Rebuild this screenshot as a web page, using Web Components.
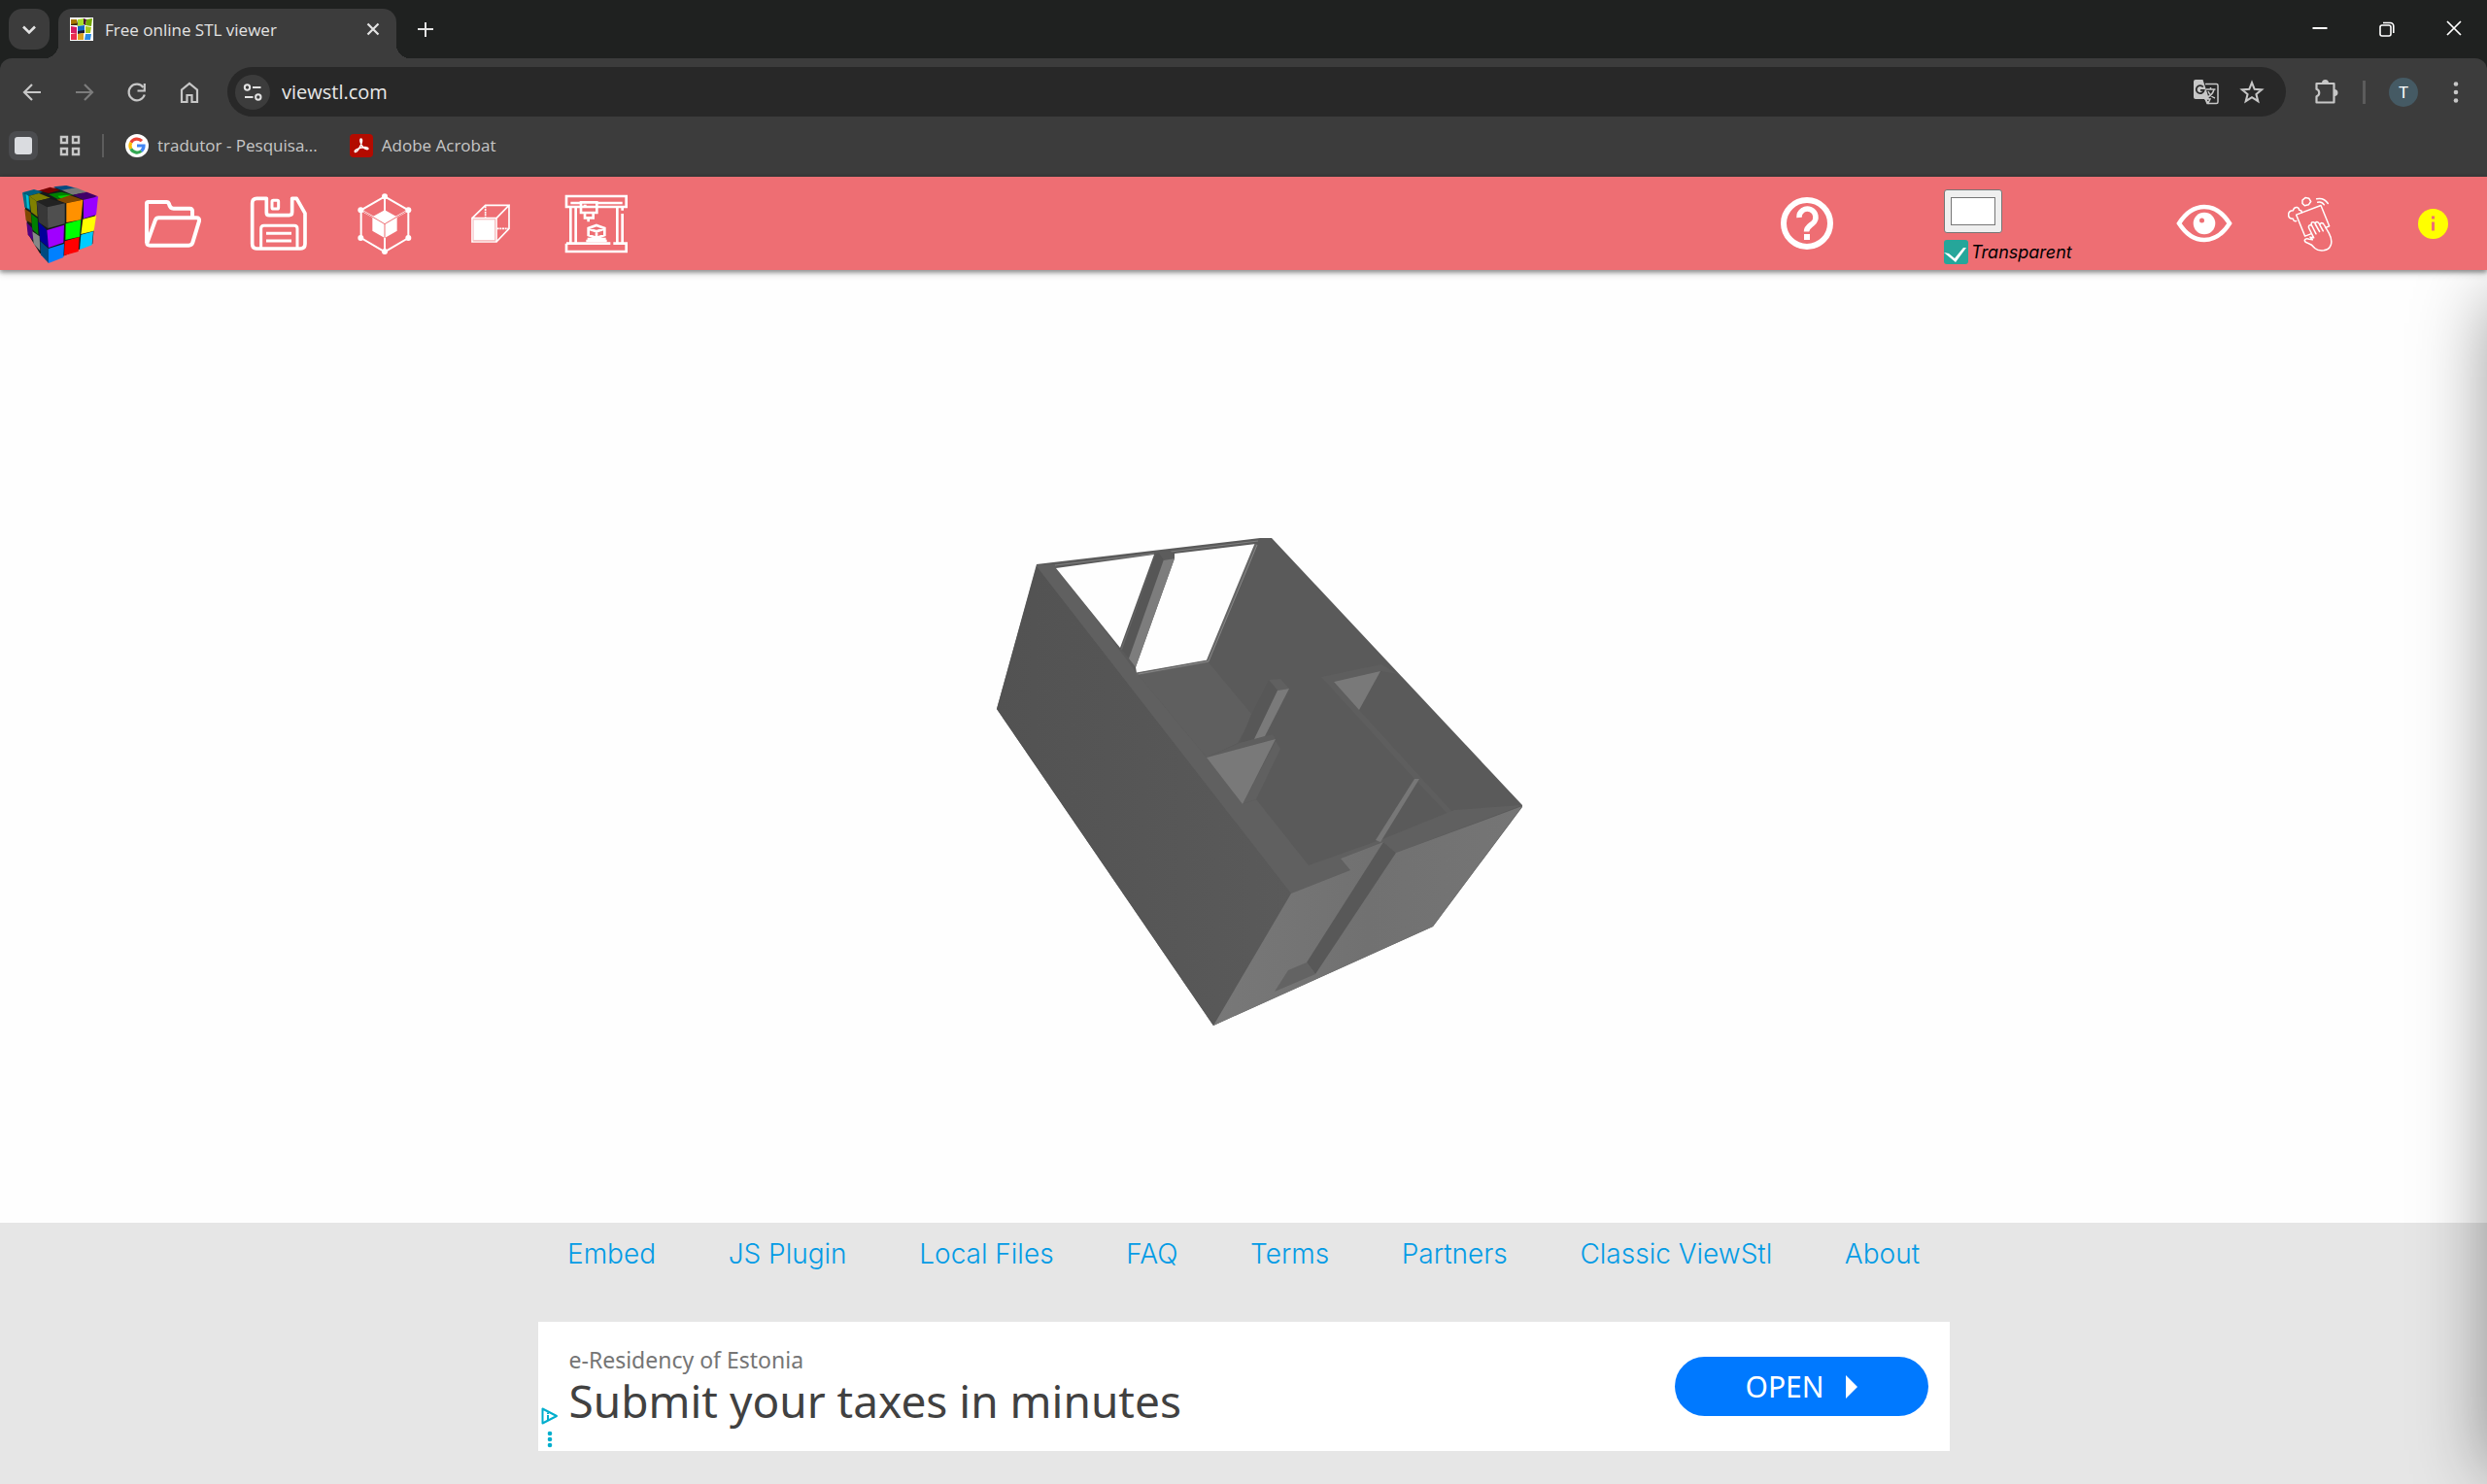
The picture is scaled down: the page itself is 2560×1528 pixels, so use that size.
<!DOCTYPE html>
<html lang="en">
<head>
<meta charset="utf-8">
<title>Free online STL viewer</title>
<style>
	body {
		margin: 0;
		background: #fff;
	}
</style>
</head>
<body>
<stl-window></stl-window>
<script>
(function () {
	const UI_FONT = '"Open Sans", "Noto Sans", sans-serif';
	const SITE_FONT = 'Inter, "Open Sans", sans-serif';

	// name: [viewBox, width, height, markup]
	const ICONS = {
		chevron: ['0 0 24 24', 24, 24, '<path d="M6 9.500l6 6 6-6" fill="none" stroke="currentColor" stroke-width="2.600"/>'],
		close: ['0 0 24 24', 24, 24, '<path d="M6.500 6.500l11 11M17.500 6.500l-11 11" stroke="currentColor" stroke-width="2.200"/>'],
		plus: ['0 0 24 24', 24, 24, '<path d="M12 5v15M4 12h16" stroke="currentColor" stroke-width="2"/>'],
		minimize: ['0 0 24 24', 24, 24, '<path d="M4.500 11h15" stroke="currentColor" stroke-width="2"/>'],
		restore: ['0 0 24 24', 24, 24, '<g fill="none" stroke="currentColor" stroke-width="1.600"><rect x="5" y="8" width="11" height="11" rx="2"/><path d="M8 5.500h7.500a3.300 3.300 0 0 1 3.300 3.300V16"/></g>'],
		exit: ['0 0 24 24', 24, 24, '<path d="M5 4l14 14M19 4L5 18" stroke="currentColor" stroke-width="1.700"/>'],
		back: ['0 0 24 24', 24, 24, '<path d="M21 12H4.500M12 4l-8 8 8 8" fill="none" stroke="currentColor" stroke-width="2.200"/>'],
		forward: ['0 0 24 24', 24, 24, '<path d="M3 12h16.500M12 4l8 8-8 8" fill="none" stroke="currentColor" stroke-width="2.200"/>'],
		reload: ['0 0 24 24', 24, 24, '<path d="M19.800 14.500A8.300 8.300 0 1 1 18.500 7" fill="none" stroke="currentColor" stroke-width="2.200"/><path d="M19.800 3v7.500h-7.300" fill="none" stroke="currentColor" stroke-width="2.200"/>'],
		home: ['0 0 24 24', 24, 24, '<path d="M4 22V9.500L12 3l8 6.500V22h-5.500v-7h-5v7z" fill="none" stroke="currentColor" stroke-width="2.200"/>'],
		tune: ['0 0 24 24', 24, 24, '<g fill="none" stroke="currentColor" stroke-width="2"><circle cx="6.500" cy="7" r="2.700"/><path d="M12 7h8.500M4 17h8.500"/><circle cx="17.800" cy="17" r="2.700"/></g>'],
		translate: ['0 0 27 27', 27, 27, '<path d="M13 5.500h11.500a1.500 1.500 0 0 1 1.500 1.500v17a1.500 1.500 0 0 1-1.500 1.500h-9.500l-2-5" fill="none" stroke="currentColor" stroke-width="1.500"/><path d="M3 1h7.500l6.500 20H3a2 2 0 0 1-2-2V3a2 2 0 0 1 2-2z" fill="currentColor"/><path d="M10.800 8.500a4 4 0 1 0 .9 3.400H8" fill="none" stroke="#282828" stroke-width="1.800"/><path d="M14 11h9.500M18.500 9v2M22 11c-.8 3.500-3.500 6.500-6.500 8M16 13c1.500 3.500 4 6 7 7M13 21l3 4 2-4z" fill="none" stroke="currentColor" stroke-width="1.500"/>'],
		star: ['0 0 24 24', 26, 26, '<path d="M12 2.800l2.500 6.300 6.800.5-5.200 4.300 1.700 6.600-5.800-3.700-5.800 3.700 1.700-6.600-5.200-4.300 6.800-.5z" fill="none" stroke="currentColor" stroke-width="1.900"/>'],
		puzzle: ['0 0 27 27', 27, 27, '<path d="M3.500 5h18v19.500h-18v-6.200a4 4 0 0 0 0-7.600z" fill="none" stroke="currentColor" stroke-width="2.200" stroke-linejoin="round"/><path d="M9 4.500a3.500 3.500 0 0 1 7 0zM22 11a3.300 3.300 0 0 1 0 7z" fill="currentColor"/>'],
		more: ['0 0 24 24', 24, 24, '<g fill="currentColor"><circle cx="12" cy="3.500" r="2.300"/><circle cx="12" cy="12" r="2.300"/><circle cx="12" cy="20.500" r="2.300"/></g>'],
		apps: ['0 0 22 22', 22, 22, '<g fill="none" stroke="currentColor" stroke-width="2.400"><path d="M2 2h6v6H2zM14 2h6v6h-6zM2 14h6v6H2zM14 14h6v6h-6z"/></g>'],
		panel: ['0 0 30 30', 30, 30, '<rect width="30" height="30" rx="8" fill="#4b4c4f"/><rect x="6" y="6" width="18" height="18" rx="3" fill="#dadce0"/>'],
		favicon: ['0 0 24 24', 24, 24, '<path d="M0 0h24v24H0z" fill="#fff"/><path d="M1 2h6v6H1z" fill="#a87800"/><path d="M1 7l6-1v2H1zM7 2l1 5-1 2z" fill="#3a2a08"/><path d="M8 2l6-1v7l-6 1z" fill="#a5e02c"/><path d="M14 1l3 1-1 6-2-1z" fill="#4d0a33"/><path d="M17 2l6-1-1 8-6-1z" fill="#72a800"/><path d="M1 9l6 1v6H1z" fill="#d41c62"/><path d="M8 9l7-1v7l-7 1z" fill="#1268c4"/><path d="M8 14l7-1v3l-7 1z" fill="#1a1a30"/><path d="M16 9l6 1-1 6h-5z" fill="#a6c81c"/><path d="M1 17l6-1v7H1z" fill="#ea2b4e"/><path d="M8 17l6-1v7H8z" fill="#dca322"/><path d="M16 17h6l-1 6h-6z" fill="#2a8ae4"/>'],
		google: ['0 0 24 24', 24, 24, '<circle cx="12" cy="12" r="12" fill="#fff"/><g fill="none" stroke-width="3.200"><path d="M17 7.200A7 7 0 0 0 5.800 8.700" stroke="#ea4335"/><path d="M5.800 8.700a7 7 0 0 0 0 6.600" stroke="#fbbc05"/><path d="M5.800 15.300A7 7 0 0 0 16.500 17.400" stroke="#34a853"/><path d="M16.500 17.400A7 7 0 0 0 19 12h-7" stroke="#4285f4"/></g>'],
		acrobat: ['0 0 24 24', 24, 24, '<rect width="24" height="24" rx="4" fill="#b30b00"/><path d="M11.500 5c1.500 0 1.300 3-.2 6.500C9.500 15.500 7 19 5.500 18.500 4 17.500 8 14.800 12 14c4-.8 7-.3 7 1s-3 .8-5.300-1.500C11.300 11.200 10 5 11.500 5z" fill="none" stroke="#fff" stroke-width="1.500"/>'],
		logo: ['69 45 234 243', 78, 81, `
			<path d="M72 72L200 50l98 36-12 142-134 56-30-28-34-56z" fill="#151a1a"/>
			<path d="M165 52l40-4 30 8-45 7z" fill="#004a80"/><path d="M120 64l35-11 30 9-35 10z" fill="#700"/>
			<path d="M69 70l36-10 27 8-42 12z" fill="#006080"/><path d="M190 62l45-7 33 13-43 9z" fill="#777"/>
			<path d="M150 75l40-7 35 9-47 13z" fill="#008000"/><path d="M178 80l38-3-2 4-26 8z" fill="#00d000"/><path d="M90 80l30-8 35 14-42 11z" fill="#808000"/>
			<path d="M225 77l43-9 35 14-45 10z" fill="#400068"/><path d="M175 92l40-14 41 14-53 11z" fill="#804800"/>
			<path d="M113 97l37-9 50 15-54 12z" fill="#222"/>
			<path d="M69 70l21 10 4 45-18-10z" fill="#007088"/><path d="M80 75l8 5 2 40-6-3z" fill="#00c0d8"/><path d="M76 120l19 12 3 33-18-10z" fill="#804800"/><path d="M82 162l18 18 3 38-17-18z" fill="#500080"/>
			<path d="M90 80l23 17 3 48-20-15z" fill="#808000"/><path d="M96 135l20 15 2 50-18-16z" fill="#008000"/><path d="M100 190l22 15 2 45-20-22z" fill="#888"/>
			<path d="M113 97l33 18 2 65-28-18z" fill="#383838"/><path d="M118 160l27 26 5 54-26-22z" fill="#00009a"/><path d="M124 220l26 23v45l-24-26z" fill="#004a80"/>
			<path d="M146 115l54-12v63l-52 14z" fill="#4f4f4f"/><path d="M205 103l51-11-6 62-45 8z" fill="#ff9100"/><path d="M258 92l45-10-6 56-39 12z" fill="#90f"/>
			<path d="M145 186l53-16-2 54-46 16z" fill="#a000ff"/><path d="M203 166l47-12-4 52-44 10z" fill="#0f0"/><path d="M256 152l41-10-7 46-40 10z" fill="#ff0"/>
			<path d="M150 243l48-15-2 42-46 18z" fill="#0080ff"/><path d="M200 220l45-13-3 45-44 12z" fill="red"/><path d="M250 200l38-10-4 42-38 14z" fill="#00ccff"/>`],
		folder: ['444 90 180 150', 60, 50, '<g fill="none" stroke="#fff" stroke-width="12" stroke-linejoin="round"><path d="M453 226V104q0-5 5-5h56q6 0 8 6 3 14 14 14h50q8 0 8 8v20"/><path d="M454 226l26-72q3-6 10-6h116q11 0 9 10l-20 66q-3 9-12 9H464q-10 0-10-7z"/></g>'],
		save: ['771 78 180 174', 60, 58, '<g fill="none" stroke="#fff" stroke-width="11" stroke-linejoin="round"><path d="M823 88h-30q-14 0-14 14v126q0 15 14 15h134q15 0 15-15v-94l-26-46h-14v42q0 10-9 10h-62q-8 0-8-8z"/><path d="M806 243v-62q0-9 9-9h94q9 0 9 9v62M822 196h78M822 219h78" stroke-width="9"/><rect x="840" y="94" width="20" height="26" rx="4" stroke-width="9"/></g>'],
		mesh: ['84 70 168 189', 56, 63, '<g fill="none" stroke="#fff" stroke-width="6"><path d="M168 80l73 42v86l-73 43-73-43v-86zM168 80v46M95 122l46 26M241 122l-46 26M168 165v86"/></g><path d="M168 122l38 21v43l-38 22-38-22v-43z" fill="#fff"/><path d="M95 122l73 43 73-43M168 165v43" fill="none" stroke="#ee6e73" stroke-width="3"/><g fill="#fff"><circle cx="168" cy="80" r="9"/><circle cx="94" cy="122" r="9"/><circle cx="241" cy="122" r="9"/><circle cx="94" cy="208" r="9"/><circle cx="241" cy="208" r="9"/><circle cx="168" cy="250" r="9"/></g>'],
		box: ['435 105 120 120', 40, 40, '<path d="M441 152h68v66h-68z" fill="#fff"/><g fill="none" stroke="#fff" stroke-width="5"><path d="M438 149h75v73h-75zM438 149l41-40h73l-39 40M552 109v72l-39 41"/></g><path d="M479 112v34M515 181h34" stroke="#fff" stroke-width="5" stroke-dasharray="6 2"/><path d="M442 153h67v65h-67z" fill="none" stroke="#f6b6b9" stroke-width="2"/>'],
		printer: ['723 73 198 183', 66, 61, '<g fill="none" stroke="#fff" stroke-width="8"><path d="M729 79h185v33H729zM729 225h136M874 225h40v25H729v-25M742 115v106M758 115v106M886 115v106M902 133v88M902 115v8"/><path d="M742 100h34M824 100h78M774 98h49v32h-49zM786 132v14h26v-14M797 146v12M790 217h64M794 211h57"/><path d="M822 169l25 9v21l-25 9-25-9v-21zM799 180l23 8 23-8M822 188v20"/></g><path d="M782 105h9v8h-9z" fill="#fff"/>'],
		help: ['0 0 54 54', 54, 54, '<circle cx="27" cy="27" r="24" fill="none" stroke="#fff" stroke-width="6"/><path d="M19 21a8.500 8.500 0 1 1 14 6c-3 2.600-6.500 4-6.500 8.500" fill="none" stroke="#fff" stroke-width="5.500"/><path d="M24 38h6v6h-6z" fill="#fff"/>'],
		eye: ['0 0 58 40', 58, 40, '<path d="M3 20C10 9 19 3 29 3s19 6 26 17C48 31 39 37 29 37S10 31 3 20z" fill="none" stroke="#fff" stroke-width="4.500"/><circle cx="29" cy="20" r="11.300" fill="#fff"/><circle cx="26.500" cy="17" r="2.500" fill="#ee6e73"/>'],
		touch: ['468 80 138 170', 46, 57, '<g fill="none" stroke="#fff" stroke-width="4.500" stroke-linejoin="round" stroke-linecap="round"><path d="M539 196l-18 7-27-66 76-29 26 64-12 5"/><path d="M494 156q-8 3-10-7-15 0-14-13 0-11 14-12 3-12 13-10 6 2 6 8 8 0 8 8"/><path d="M513 92l9-8 11 2 6 10-7 10-12 3-7-7zM557 88q22-5 35 14M560 98q13-3 20 8"/><path d="M548 208l-14-28q-4-8 1-11 5-2 9 5l11 22-14-28q-2-7 3-8 5-2 9 5l13 24-13-22q-1-7 4-8 5-1 8 6l12 22-10-18q0-6 5-7 5 0 8 6l15 26q12 22 5 38-4 12-21 15-18 2-28-7-9-12-20-15-12-3-11-10 3-6 14-3l10 2-7-8z"/></g>'],
		info: ['0 0 31 31', 31, 31, '<circle cx="15.500" cy="15.500" r="15.500" fill="#ff0"/><path d="M14 7.500h3v3h-3zM14 13.500h3v9h-3z" fill="#ee6e73"/>'],
		play: ['0 0 12 24', 12, 24, '<path d="M0 0l12 12L0 24z" fill="currentColor"/>'],
		adchoices: ['0 0 18 18', 18, 18, '<path d="M1.500 1.500v15L16 9z" fill="none" stroke="currentColor" stroke-width="2" stroke-linejoin="round"/><path d="M6 8h2v5H6zM6 5.500h2v1.600H6z" fill="currentColor"/>'],
		dots: ['0 0 6 18', 6, 18, '<g fill="currentColor"><circle cx="3" cy="3" r="2.300"/><circle cx="3" cy="9" r="2.300"/><circle cx="3" cy="15" r="2.300"/></g>'],
	};

	function define(name, render) {
		if (customElements.get(name)) return;
		customElements.define(
			name,
			class extends HTMLElement {
				connectedCallback() {
					if (this.shadowRoot) return;
					const template = document.createElement('template');
					template.innerHTML = render(this);
					this.attachShadow({ mode: 'open' }).appendChild(
						template.content.cloneNode(true)
					);
				}
			}
		);
	}

	const BUTTON_RESET = `
		button {
			display: flex;
			align-items: center;
			justify-content: center;
			flex: none;
			margin: 0;
			padding: 0;
			border: 0;
			background: none;
			color: inherit;
			font: inherit;
			cursor: pointer;
		}`;

	define('stl-icon', (el) => {
		const [viewBox, width, height, markup] = ICONS[el.getAttribute('name')];
		return `
		<style>
			:host { display: inline-flex; flex: none; }
			svg { display: block; }
		</style>
		<svg viewBox="${viewBox}" width="${width}" height="${height}" aria-hidden="true">${markup}</svg>`;
	});

	define('browser-tabs', () => `
		<style>
			:host {
				display: flex;
				align-items: flex-end;
				height: 60px;
				padding-left: 9px;
				background: #1f2120;
				color: #e3e3e3;
				font: 17px/26px ${UI_FONT};
			}
			${BUTTON_RESET}
			.search {
				width: 42px;
				height: 42px;
				margin: 0 9px 9px 0;
				border-radius: 14px;
				background: #3c3c3c;
			}
			.tab {
				position: relative;
				display: flex;
				align-items: center;
				box-sizing: border-box;
				width: 348px;
				height: 51px;
				padding: 0 12px 9px;
				border-radius: 14px 14px 0 0;
				background: #3c3c3c;
			}
			.tab::before,
			.tab::after {
				content: '';
				position: absolute;
				bottom: 0;
				width: 14px;
				height: 14px;
			}
			.tab::before {
				right: 100%;
				background: radial-gradient(circle at 0 0, transparent 14px, #3c3c3c 14px);
			}
			.tab::after {
				left: 100%;
				background: radial-gradient(circle at 100% 0, transparent 14px, #3c3c3c 14px);
			}
			.title {
				flex: 1;
				padding-top: 2px;
				margin-left: 12px;
			}
			.new {
				width: 60px;
				height: 60px;
			}
			.controls {
				display: flex;
				margin-left: auto;
				color: #fff;
			}
			.controls button {
				width: 69px;
				height: 60px;
			}
		</style>
		<button class="search" aria-label="Search tabs"><stl-icon name="chevron"></stl-icon></button>
		<div class="tab">
			<stl-icon name="favicon"></stl-icon>
			<span class="title">Free online STL viewer</span>
			<button aria-label="Close tab"><stl-icon name="close"></stl-icon></button>
		</div>
		<button class="new" aria-label="New tab"><stl-icon name="plus"></stl-icon></button>
		<div class="controls">
			<button aria-label="Minimize"><stl-icon name="minimize"></stl-icon></button>
			<button aria-label="Restore"><stl-icon name="restore"></stl-icon></button>
			<button aria-label="Close"><stl-icon name="exit"></stl-icon></button>
		</div>`);

	define('browser-toolbar', () => `
		<style>
			:host {
				display: flex;
				align-items: center;
				padding: 9px 5px 9px 6px;
				border-radius: 12px 12px 0 0;
				background: #3c3c3c;
				color: #c7c7c7;
				font: 20px/28px ${UI_FONT};
			}
			${BUTTON_RESET}
			button { width: 54px; height: 51px; }
			button:disabled { color: #7c7c7c; }
			form {
				display: flex;
				align-items: center;
				flex: 1;
				box-sizing: border-box;
				height: 51px;
				margin: 0 14px 0 12px;
				padding: 0 11px 0 8px;
				border-radius: 26px;
				background: #282828;
			}
			form button { width: 48px; }
			form .site {
				width: 36px;
				height: 36px;
				border-radius: 50%;
				background: #3c3c3c;
				color: #e3e3e3;
			}
			input {
				flex: 1;
				min-width: 0;
				padding: 0 12px;
				border: 0;
				outline: 0;
				background: none;
				color: #e8e8e8;
				font: inherit;
			}
			hr {
				width: 3px;
				height: 24px;
				margin: 0 12px 0 11px;
				border: 0;
				background: #5c5c5c;
			}
			.avatar {
				width: 30px;
				height: 30px;
				margin: 0 12px;
				border-radius: 50%;
				background: #455a64;
				color: #fff;
				font: 17px/30px Roboto, sans-serif;
			}
		</style>
		<button aria-label="Back"><stl-icon name="back"></stl-icon></button>
		<button aria-label="Forward" disabled><stl-icon name="forward"></stl-icon></button>
		<button aria-label="Reload"><stl-icon name="reload"></stl-icon></button>
		<button aria-label="Home"><stl-icon name="home"></stl-icon></button>
		<form>
			<button class="site" type="button" aria-label="Site information"><stl-icon name="tune"></stl-icon></button>
			<input type="text" value="viewstl.com" aria-label="Address" spellcheck="false">
			<button type="button" aria-label="Translate"><stl-icon name="translate"></stl-icon></button>
			<button type="button" aria-label="Bookmark"><stl-icon name="star"></stl-icon></button>
		</form>
		<button aria-label="Extensions"><stl-icon name="puzzle"></stl-icon></button>
		<hr>
		<button class="avatar" aria-label="Profile">T</button>
		<button aria-label="Menu"><stl-icon name="more"></stl-icon></button>`);

	define('browser-bookmarks', () => `
		<style>
			:host {
				display: flex;
				align-items: center;
				gap: 22px;
				padding: 0 9px 11px;
				background: #3c3c3c;
				color: #c7c7c7;
				font: 17px/42px ${UI_FONT};
			}
			${BUTTON_RESET}
			hr {
				width: 2px;
				height: 24px;
				margin: 0;
				border: 0;
				background: #5c5c5c;
			}
			a {
				display: flex;
				align-items: center;
				gap: 9px;
				margin-right: 11px;
				color: inherit;
				text-decoration: none;
			}
		</style>
		<button aria-label="Tab groups"><stl-icon name="panel"></stl-icon></button>
		<button aria-label="Apps"><stl-icon name="apps"></stl-icon></button>
		<hr>
		<a href="#tradutor"><stl-icon name="google"></stl-icon>tradutor - Pesquisa...</a>
		<a href="#acrobat"><stl-icon name="acrobat"></stl-icon>Adobe Acrobat</a>`);

	define('background-picker', () => `
		<style>
			:host {
				display: flex;
				flex-direction: column;
				justify-content: center;
				gap: 7px;
				color: #000;
				font: italic 18px/25px ${SITE_FONT};
			}
			input { margin: 0; }
			input[type="color"] {
				box-sizing: border-box;
				width: 60px;
				height: 45px;
				padding: 7px 6px;
				border: 1px solid #767676;
				border-radius: 3px;
				background: #efefef;
			}
			input::-webkit-color-swatch-wrapper { padding: 0; }
			input::-webkit-color-swatch { border: 1px solid #767676; }
			label {
				display: flex;
				align-items: center;
				gap: 3px;
			}
			input[type="checkbox"] {
				appearance: none;
				width: 25px;
				height: 25px;
				border-radius: 3px;
				background: #26a69a;
			}
			input[type="checkbox"]:checked::before {
				content: '';
				display: block;
				height: 25px;
				background: #fff;
				clip-path: polygon(0 13px, 5px 14px, 11px 19px, 20px 8px, 23px 8px, 12px 23px);
			}
		</style>
		<input type="color" value="#ffffff" aria-label="Background color">
		<label><input type="checkbox" checked>Transparent</label>`);

	define('viewer-header', () => `
		<style>
			:host {
				position: relative;
				z-index: 1;
				display: flex;
				align-items: center;
				height: 96px;
				background: #ee6e73;
				box-shadow: 0 3px 3px rgba(0, 0, 0, 0.14), 0 4px 7px rgba(0, 0, 0, 0.18), 0 1px 5px rgba(0, 0, 0, 0.24);
			}
			${BUTTON_RESET}
			button {
				width: 109px;
				height: 96px;
			}
			a {
				display: flex;
				justify-content: center;
				width: 123px;
			}
			.help { margin-left: auto; }
			background-picker {
				width: 213px;
				padding-top: 7px;
				margin-left: 87px;
			}
			.info { margin: 0 1px 0 18px; }
		</style>
		<a href="#home" aria-label="ViewStl"><stl-icon name="logo"></stl-icon></a>
		<button aria-label="Open file"><stl-icon name="folder"></stl-icon></button>
		<button aria-label="Save file"><stl-icon name="save"></stl-icon></button>
		<button aria-label="Display"><stl-icon name="mesh"></stl-icon></button>
		<button aria-label="Bounding box"><stl-icon name="box"></stl-icon></button>
		<button aria-label="3D print"><stl-icon name="printer"></stl-icon></button>
		<button class="help" aria-label="Help"><stl-icon name="help"></stl-icon></button>
		<background-picker></background-picker>
		<button aria-label="View"><stl-icon name="eye"></stl-icon></button>
		<button aria-label="Clean"><stl-icon name="touch"></stl-icon></button>
		<button class="info" aria-label="Model info"><stl-icon name="info"></stl-icon></button>`);

	define('model-canvas', () => `
		<style>
			:host {
				display: flex;
				flex: 1;
				min-height: 0;
				background: #fefefe;
			}
			svg { width: 100%; }
		</style>
		<svg viewBox="0 278 2560 981" role="img" aria-label="Model">
			<defs>
				<linearGradient id="side" x1="0" x2="1"><stop offset="0" stop-color="#525252"/><stop offset="1" stop-color="#5a5a5a"/></linearGradient>
				<linearGradient id="front" x1="0" x2="1"><stop offset="0" stop-color="#787878"/><stop offset=".5" stop-color="#717171"/><stop offset="1" stop-color="#757575"/></linearGradient>
			</defs>
			<!-- shell -->
			<path d="M1067 581l230-27h12l258 275v2l-92 123-226 102-223-326z" fill="#5a5a5a"/>
			<path d="M1067 583l262 337-80 136-223-326z" fill="url(#side)"/>
			<!-- floor and partitions -->
			<path d="M1170 693l74-11 44 53-3 10-11 20-32 15z" fill="#5f5f5f"/>
			<path d="M1306 700l12-1 9 10-12 2z" fill="#606060"/>
			<path d="M1306 700l9 11-24 50-15 4 12-29z" fill="#575757"/>
			<path d="M1360 697l62-13 17 10-18-3-48 11 26 29 64 70 32 35-5 2-34-36z" fill="#5e5e5e"/>
			<!-- walls' top edge -->
			<path d="M1067 583l1-1 18-1 84 112 72 87 37 48 14-5 54 68 76-27 74-30 70-5-130 49-13-11-44 17 10 12-61 24z" fill="#606060"/>
			<path d="M1276 765l34-9 3 5-71 19z" fill="#5e5e5e"/>
			<path d="M1313 763l5 8-25 52-14 5z" fill="#606060"/>
			<path d="M1315 711l12-2-25 49-11 3z" fill="#7a7a7a"/>
			<path d="M1242 780l71-19-34 67z" fill="#797979"/>
			<path d="M1373 702l48-11-22 40z" fill="#797979"/>
			<path d="M1456 802l5 0-40 65-5-2z" fill="#777"/>
			<!-- front -->
			<path d="M1329 920l61-24-10-12 44-17 13 11 130-48-92 124-226 102z" fill="url(#front)"/>
			<path d="M1424 867l13 11-83 125-9-12z" fill="#585858"/>
			<path d="M1345 991l9 12-42 18 14-22z" fill="#636363"/>
			<!-- open back side -->
			<path d="M1087 585l101-14-35 96zM1209 575v-5l84-10-50 120-73 13-1-6z" fill="#fefefe"/>
			<path d="M1086 582l102-12M1205 568l90-11" stroke="#808080"/>
			<path d="M1192 570l-37 99M1293 560l-50 121-73 13" fill="none" stroke="#666" stroke-width="3"/>
			<path d="M1294 561l-50 120-72 13" fill="none" stroke="#868686"/>
			<path d="M1190 570l12-1-4 8-36 101-7-9z" fill="#565656"/>
			<path d="M1198 576l11-1-40 112-7-9z" fill="#7d7d7d"/>
			<path d="M1192 568l13-1 4 8-11 2z" fill="#5c5c5c"/>
		</svg>`);

	define('side-drawer', () => `
		<style>
			/* closed drawer: only its shadow falls into the page */
			:host {
				position: absolute;
				top: 30px;
				bottom: 10px;
				left: 100%;
				width: 400px;
				box-shadow: 0 0 70px rgba(0, 0, 0, 0.38);
				pointer-events: none;
			}
		</style>`);

	define('footer-nav', () => `
		<style>
			:host { display: block; }
			nav {
				display: flex;
				justify-content: space-between;
				max-width: 1392px;
				margin: 0 auto;
				font: 300 28px/36px ${SITE_FONT};
			}
			::slotted(a) {
				color: #039be5;
				text-decoration: none;
			}
		</style>
		<nav><slot></slot></nav>`);

	define('ad-banner', () => `
		<style>
			:host {
				position: relative;
				display: flex;
				align-items: center;
				justify-content: space-between;
				box-sizing: border-box;
				max-width: 1453px;
				height: 133px;
				margin: 0 auto;
				padding: 0 22px 0 32px;
				background: #fff;
				font-family: "Noto Sans", "Open Sans", sans-serif;
			}
			${BUTTON_RESET}
			p {
				margin: 0;
				color: #757575;
				font-size: 23px;
				line-height: 28px;
			}
			h2 {
				margin: 0;
				color: #414141;
				font-size: 46px;
				font-weight: 400;
				line-height: 56px;
			}
			.open {
				gap: 22px;
				width: 261px;
				height: 61px;
				border-radius: 31px;
				background: #0079ff;
				color: #fff;
				font-size: 30px;
			}
			.choices {
				position: absolute;
				bottom: 3px;
				left: 3px;
				display: flex;
				flex-direction: column;
				align-items: center;
				gap: 6px;
				color: #00aecd;
			}
		</style>
		<div>
			<p><slot name="sponsor"></slot></p>
			<h2><slot></slot></h2>
		</div>
		<button class="open">OPEN<stl-icon name="play"></stl-icon></button>
		<div class="choices">
			<button aria-label="AdChoices"><stl-icon name="adchoices"></stl-icon></button>
			<button aria-label="Ad options"><stl-icon name="dots"></stl-icon></button>
		</div>`);

	define('stl-window', () => `
		<style>
			:host {
				display: flex;
				flex-direction: column;
				min-height: 100vh;
			}
			main {
				position: relative;
				display: flex;
				flex: 1;
				flex-direction: column;
				overflow: hidden;
			}
			.strip { background: #1f2120; }
			footer {
				padding: 14px 0 34px;
				background: #e6e6e6;
			}
			footer ad-banner { margin-top: 52px; }
		</style>
		<header>
			<browser-tabs></browser-tabs>
			<div class="strip"><browser-toolbar></browser-toolbar></div>
			<browser-bookmarks></browser-bookmarks>
			<viewer-header></viewer-header>
		</header>
		<main>
			<model-canvas></model-canvas>
			<footer>
				<footer-nav>
					<a href="#embed">Embed</a>
					<a href="#plugin">JS Plugin</a>
					<a href="#local">Local Files</a>
					<a href="#faq">FAQ</a>
					<a href="#terms">Terms</a>
					<a href="#partners">Partners</a>
					<a href="#classic">Classic ViewStl</a>
					<a href="#about">About</a>
				</footer-nav>
				<ad-banner>
					<span slot="sponsor">e-Residency of Estonia</span>
					Submit your taxes in minutes
				</ad-banner>
			</footer>
			<side-drawer></side-drawer>
		</main>`);
})();
</script>
</body>
</html>
